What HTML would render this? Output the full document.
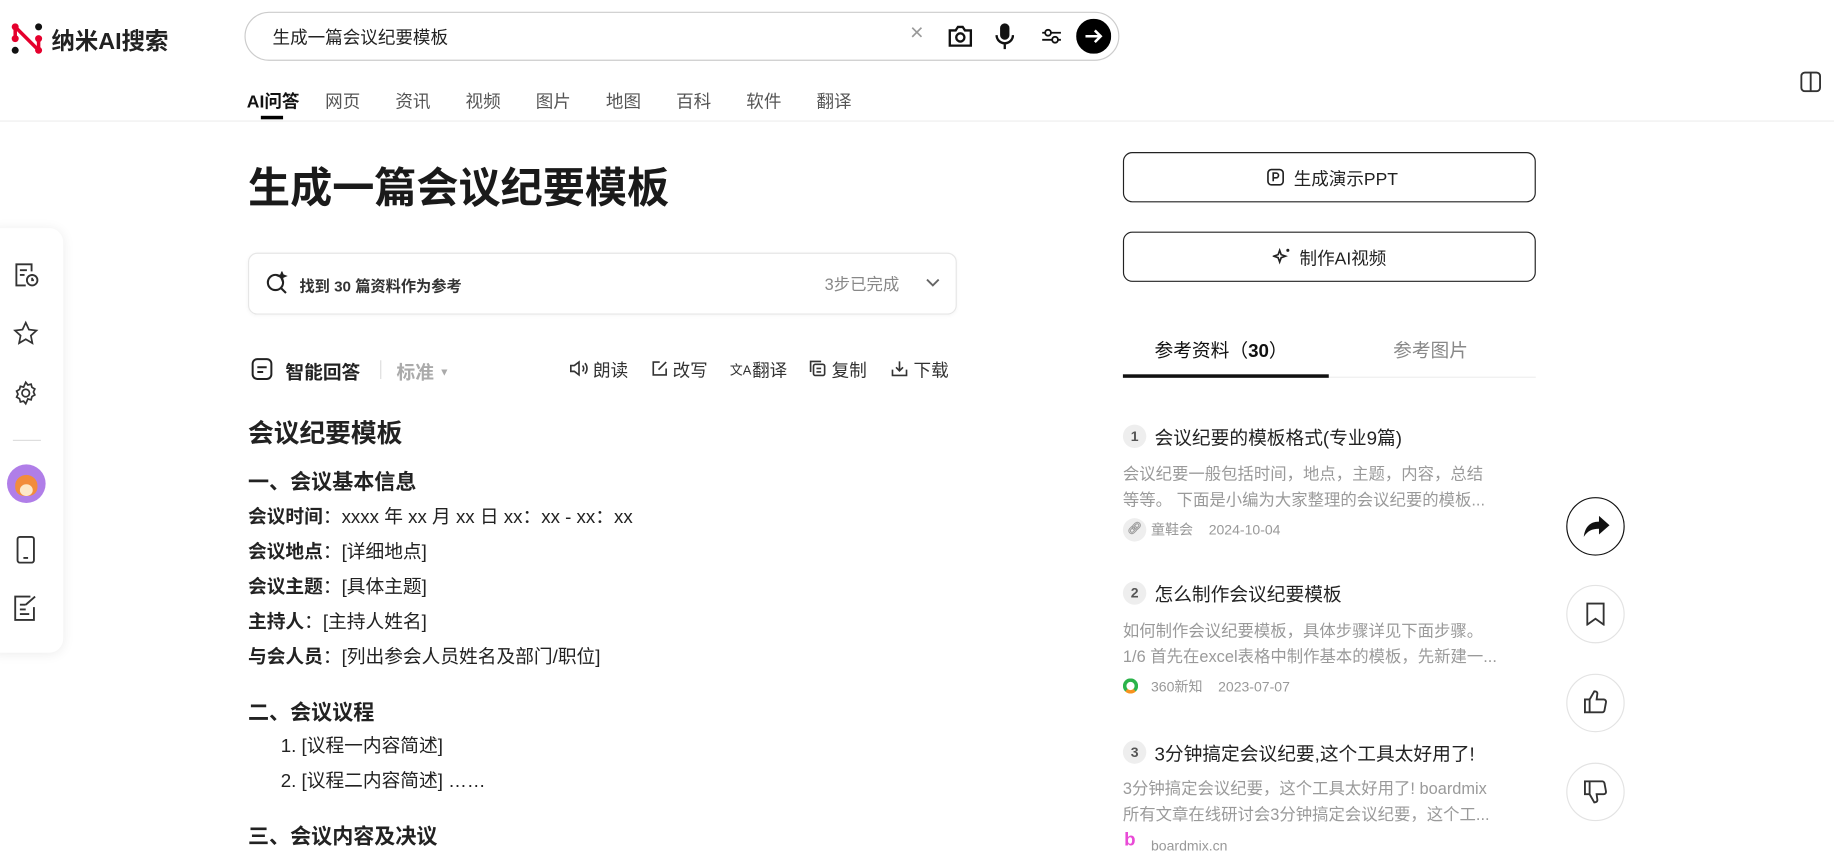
<!DOCTYPE html>
<html><head><meta charset="utf-8"><style>
html,body{margin:0;padding:0;width:1834px;height:863px;overflow:hidden;background:#fff}
#w{position:absolute;left:0;top:0;width:1568px;height:738px;transform:scale(1.1697);transform-origin:0 0;font-family:"Liberation Sans","Noto Sans CJK SC",sans-serif;color:#222}
.a{position:absolute;white-space:nowrap}
.b{font-weight:bold}
.g{color:#888}
svg{position:absolute}
.ln{font-size:16px;line-height:20px}
.circ{position:absolute;width:50px;height:50px;border-radius:50%;border:1px solid #e3e3e3;box-sizing:border-box}
.num{position:absolute;width:20px;height:20px;border-radius:50%;background:#eee;font-size:12px;font-weight:bold;color:#555;text-align:center;line-height:20px}
</style></head><body><div id="w">
<svg style="left:9px;top:19px" width="28" height="28" viewBox="0 0 28 28"><circle cx="4" cy="4" r="3" fill="#e5002d"/><circle cx="4" cy="14" r="3" fill="#e5002d"/><circle cx="4" cy="24" r="3" fill="#111"/><circle cx="24" cy="4" r="3" fill="#111"/><circle cx="24" cy="14" r="3" fill="#e5002d"/><circle cx="24" cy="24" r="3" fill="#e5002d"/><path d="M4 4L24 24M4 14V4M24 14V24" stroke="#e5002d" stroke-width="3"/></svg>
<div class="a b" style="left:44px;top:19px;font-size:20px">纳米AI搜索</div>
<div class="a" style="left:209px;top:10px;width:746px;height:40px;border:1px solid #ccc;border-radius:21px"></div>
<div class="a" style="left:233px;top:21px;font-size:15px">生成一篇会议纪要模板</div>
<div class="a" style="left:778px;top:17px;font-size:20px;color:#999">×</div>
<svg style="left:810px;top:21px" width="22" height="20" viewBox="0 0 22 20"><path d="M2 5h5l2-3h4l2 3h5v13H2z" fill="none" stroke="#111" stroke-width="2"/><circle cx="11" cy="11" r="3.5" fill="none" stroke="#111" stroke-width="2"/></svg>
<svg style="left:851px;top:19px" width="16" height="24" viewBox="0 0 16 24"><rect x="4" y="1" width="8" height="14" rx="4" fill="#111"/><path d="M1 11a7 7 0 0 0 14 0M8 18v5" stroke="#111" stroke-width="2" fill="none"/></svg>
<svg style="left:890px;top:23px" width="18" height="16" viewBox="0 0 18 16"><path d="M1 5h16M1 11h16" stroke="#111" stroke-width="1.6"/><circle cx="6" cy="5" r="2.5" fill="#fff" stroke="#111" stroke-width="1.6"/><circle cx="12" cy="11" r="2.5" fill="#fff" stroke="#111" stroke-width="1.6"/></svg>
<svg style="left:920px;top:16px" width="30" height="30" viewBox="0 0 30 30"><circle cx="15" cy="15" r="15" fill="#000"/><path d="M8 15h13M16 10l5 5-5 5" stroke="#fff" stroke-width="2.2" fill="none"/></svg>
<div class="a" style="left:211px;top:76px;font-size:15px;color:#555"><span class="b" style="color:#111">AI问答</span></div>
<div class="a" style="left:278px;top:76px;font-size:15px;color:#555">网页</div>
<div class="a" style="left:338px;top:76px;font-size:15px;color:#555">资讯</div>
<div class="a" style="left:398px;top:76px;font-size:15px;color:#555">视频</div>
<div class="a" style="left:458px;top:76px;font-size:15px;color:#555">图片</div>
<div class="a" style="left:518px;top:76px;font-size:15px;color:#555">地图</div>
<div class="a" style="left:578px;top:76px;font-size:15px;color:#555">百科</div>
<div class="a" style="left:638px;top:76px;font-size:15px;color:#555">软件</div>
<div class="a" style="left:698px;top:76px;font-size:15px;color:#555">翻译</div>
<div class="a" style="left:223px;top:99px;width:19px;height:3px;background:#000"></div>
<div class="a" style="left:0;top:103px;width:1568px;height:1px;background:#eee"></div>
<svg style="left:1539px;top:61px" width="18" height="18" viewBox="0 0 18 18"><rect x="1" y="1" width="16" height="16" rx="3" fill="none" stroke="#333" stroke-width="1.6"/><path d="M9 1v16" stroke="#333" stroke-width="1.6"/></svg>
<div class="a" style="left:-12px;top:195px;width:66px;height:363px;border-radius:12px;box-shadow:0 1px 10px rgba(0,0,0,.08);background:#fff"></div>
<svg style="left:12px;top:224px" width="22" height="22" viewBox="0 0 22 22" fill="none" stroke="#333" stroke-width="1.6"><path d="M15 8V2H2v18h8M5 7h6M5 11h4"/><circle cx="15.5" cy="15.5" r="4.5"/><path d="M15.5 13.5v2h1.5"/></svg>
<svg style="left:11px;top:274px" width="22" height="22" viewBox="0 0 24 24" fill="none" stroke="#333" stroke-width="1.6"><path d="M12 2l3 6.5 7 .8-5.2 4.8 1.4 7-6.2-3.6-6.2 3.6 1.4-7L2 9.3l7-.8z"/></svg>
<svg style="left:11px;top:325px" width="22" height="22" viewBox="0 0 24 24" fill="none" stroke="#333" stroke-width="1.6"><circle cx="12" cy="12" r="3.5"/><path d="M12 2l2 2.5 3-.8.8 3 2.7 1.5-1.3 2.8 1.3 2.8-2.7 1.5-.8 3-3-.8L12 22l-2-2.5-3 .8-.8-3L3.5 15.8 4.8 13 3.5 10.2 6.2 8.7l.8-3 3 .8z"/></svg>
<div class="a" style="left:11px;top:376px;width:24px;height:1px;background:#ddd"></div>
<div class="a" style="left:6px;top:397px;width:33px;height:33px;border-radius:50%;background:#b07ee8;overflow:hidden"><div style="position:absolute;left:7px;top:9px;width:19px;height:18px;border-radius:50% 50% 40% 40%;background:#f28c3c"></div><div style="position:absolute;left:11px;top:17px;width:11px;height:10px;border-radius:50%;background:#fde8c8"></div></div>
<svg style="left:13px;top:458px" width="18" height="24" viewBox="0 0 18 24" fill="none" stroke="#333" stroke-width="1.6"><rect x="2" y="1" width="14" height="22" rx="2"/><path d="M7 19h4"/></svg>
<svg style="left:12px;top:509px" width="20" height="22" viewBox="0 0 20 22" fill="none" stroke="#333" stroke-width="1.6"><path d="M14 1H1v20h16V10M5 8h5M5 12h5M5 16h8M10 8l8-7"/></svg>
<div class="a b" style="left:212px;top:132px;font-size:36px;color:#1a1a1a">生成一篇会议纪要模板</div>
<div class="a" style="left:212px;top:216px;width:604px;height:51px;border:1px solid #e6e6e6;border-radius:8px;box-shadow:0 1px 3px rgba(0,0,0,.04)"></div>
<svg style="left:227px;top:232px" width="20" height="20" viewBox="0 0 20 20" fill="none" stroke="#222" stroke-width="1.8"><circle cx="8.5" cy="9.5" r="6.5"/><path d="M13.5 14.5l4 4M14 1.5l.7 1.8 1.8.7-1.8.7-.7 1.8-.7-1.8-1.8-.7 1.8-.7z"/></svg>
<div class="a b" style="left:256px;top:234px;font-size:13px;color:#333">找到 30 篇资料作为参考</div>
<div class="a" style="left:705px;top:233px;font-size:14px;color:#888">3步已完成</div>
<svg style="left:791px;top:237px" width="13" height="9" viewBox="0 0 13 9"><path d="M1.5 2l5 5 5-5" stroke="#666" stroke-width="1.6" fill="none"/></svg>
<svg style="left:215px;top:306px" width="18" height="19" viewBox="0 0 18 19" fill="none" stroke="#222" stroke-width="1.7"><rect x="1" y="1" width="16" height="17" rx="4"/><path d="M5 8h8M5 12h5"/></svg>
<div class="a b" style="left:244px;top:305px;font-size:16px;color:#222">智能回答</div>
<div class="a" style="left:325px;top:308px;width:1px;height:16px;background:#ddd"></div>
<div class="a b" style="left:339px;top:305px;font-size:16px;color:#aaa">标准 <span style="font-size:9px;vertical-align:3px">▼</span></div>
<svg style="left:487px;top:308px" width="16" height="14" viewBox="0 0 16 14" fill="none" stroke="#333" stroke-width="1.4"><path d="M1 4.5h3l4-3v11l-4-3H1zM11 4.5a3.5 3.5 0 0 1 0 5M13 2.5a6.5 6.5 0 0 1 0 9"/></svg>
<div class="a" style="left:507px;top:306px;font-size:15px;color:#333">朗读</div>
<svg style="left:557px;top:308px" width="14" height="14" viewBox="0 0 14 14" fill="none" stroke="#333" stroke-width="1.4"><path d="M7 1.5H1.5v11h11V7M6 8l6.5-6.5"/></svg>
<div class="a" style="left:575px;top:306px;font-size:15px;color:#333">改写</div>
<div class="a" style="left:624px;top:308px;font-size:11px;color:#333">文A</div>
<div class="a" style="left:643px;top:306px;font-size:15px;color:#333">翻译</div>
<svg style="left:692px;top:308px" width="14" height="14" viewBox="0 0 14 14" fill="none" stroke="#333" stroke-width="1.4"><rect x="3.5" y="3.5" width="9.5" height="9.5" rx="1.5"/><path d="M1 10V1h9M6 7h4M6 10h4"/></svg>
<div class="a" style="left:711px;top:306px;font-size:15px;color:#333">复制</div>
<svg style="left:762px;top:308px" width="14" height="14" viewBox="0 0 14 14" fill="none" stroke="#333" stroke-width="1.4"><path d="M1 8v5h12V8M7 1v8M4 6l3 3 3-3"/></svg>
<div class="a" style="left:781px;top:306px;font-size:15px;color:#333">下载</div>
<div class="a b" style="left:212px;top:353px;font-size:22px">会议纪要模板</div>
<div class="a b" style="left:212px;top:398px;font-size:18px">一、会议基本信息</div>
<div class="a ln" style="left:212px;top:433px"><b>会议时间</b>：xxxx 年 xx 月 xx 日 xx：xx - xx：xx</div>
<div class="a ln" style="left:212px;top:463px"><b>会议地点</b>：[详细地点]</div>
<div class="a ln" style="left:212px;top:493px"><b>会议主题</b>：[具体主题]</div>
<div class="a ln" style="left:212px;top:523px"><b>主持人</b>：[主持人姓名]</div>
<div class="a ln" style="left:212px;top:553px"><b>与会人员</b>：[列出参会人员姓名及部门/职位]</div>
<div class="a b" style="left:212px;top:595px;font-size:18px">二、会议议程</div>
<div class="a ln" style="left:240px;top:629px">1. [议程一内容简述]</div>
<div class="a ln" style="left:240px;top:659px">2. [议程二内容简述] ……</div>
<div class="a b" style="left:212px;top:701px;font-size:18px">三、会议内容及决议</div>
<div class="a" style="left:960px;top:130px;width:351px;height:41px;border:1px solid #222;border-radius:8px"></div>
<svg style="left:1083px;top:144px" width="15" height="15" viewBox="0 0 15 15" fill="none" stroke="#222" stroke-width="1.4"><rect x="1" y="1" width="13" height="13" rx="3"/><path d="M5.5 11V4h2.5a2 2 0 0 1 0 4H5.5"/></svg>
<div class="a" style="left:1106px;top:142px;font-size:15px">生成演示PPT</div>
<div class="a" style="left:960px;top:198px;width:351px;height:41px;border:1px solid #222;border-radius:8px"></div>
<svg style="left:1088px;top:211px" width="16" height="16" viewBox="0 0 16 16"><path d="M6 3l1.3 3.7L11 8l-3.7 1.3L6 13l-1.3-3.7L1 8l3.7-1.3z" fill="none" stroke="#222" stroke-width="1.4"/><circle cx="13" cy="3" r="1.3" fill="#222"/></svg>
<div class="a" style="left:1111px;top:210px;font-size:15px">制作AI视频</div>
<div class="a" style="left:987px;top:286px;font-size:16px;color:#111">参考资料（<b>30</b>）</div>
<div class="a" style="left:1191px;top:286px;font-size:16px;color:#888">参考图片</div>
<div class="a" style="left:960px;top:322px;width:353px;height:1px;background:#eee"></div>
<div class="a" style="left:960px;top:320px;width:176px;height:3px;background:#111"></div>
<div class="num" style="left:960px;top:363px">1</div>
<div class="a" style="left:987px;top:361px;font-size:16px">会议纪要的模板格式(专业9篇)</div>
<div class="a" style="left:960px;top:394px;font-size:14px;color:#9a9a9a;line-height:22px">会议纪要一般包括时间，地点，主题，内容，总结<br>等等。 下面是小编为大家整理的会议纪要的模板...</div>
<div class="num" style="left:960px;top:443px;background:#eee;color:#999;font-size:10px">🔗︎</div>
<div class="a" style="left:984px;top:444px;font-size:12px;color:#999">童鞋会 &nbsp; &nbsp;2024-10-04</div>
<div class="num" style="left:960px;top:497px">2</div>
<div class="a" style="left:987px;top:495px;font-size:16px">怎么制作会议纪要模板</div>
<div class="a" style="left:960px;top:528px;font-size:14px;color:#9a9a9a;line-height:22px">如何制作会议纪要模板，具体步骤详见下面步骤。<br>1/6 首先在excel表格中制作基本的模板，先新建一...</div>
<div class="a" style="left:960px;top:580px;width:13px;height:13px;border-radius:50%;border:3px solid #2bb34a;border-bottom-color:#f7931e;box-sizing:border-box"></div>
<div class="a" style="left:984px;top:578px;font-size:12px;color:#999">360新知 &nbsp; &nbsp;2023-07-07</div>
<div class="num" style="left:960px;top:633px">3</div>
<div class="a" style="left:987px;top:631px;font-size:16px">3分钟搞定会议纪要,这个工具太好用了!</div>
<div class="a" style="left:960px;top:663px;font-size:14px;color:#9a9a9a;line-height:22px">3分钟搞定会议纪要，这个工具太好用了! boardmix<br>所有文章在线研讨会3分钟搞定会议纪要，这个工...</div>
<div class="a b" style="left:961px;top:710px;font-size:16px;color:#e94ad6">b</div>
<div class="a" style="left:984px;top:716px;font-size:12px;color:#999">boardmix.cn</div>
<div class="circ" style="left:1339px;top:425px;border-color:#111"></div>
<svg style="left:1353px;top:440px" width="24" height="20" viewBox="0 0 24 20"><path d="M14 1l9 8-9 8v-5C8 12 4 14 1 19 2 11 6 6 14 6z" fill="#111"/></svg>
<div class="circ" style="left:1339px;top:500px"></div>
<svg style="left:1356px;top:515px" width="16" height="20" viewBox="0 0 16 20" fill="none" stroke="#333" stroke-width="1.6"><path d="M1 1h14v18l-7-5-7 5z"/></svg>
<div class="circ" style="left:1339px;top:576px"></div>
<svg style="left:1354px;top:590px" width="20" height="20" viewBox="0 0 20 20" fill="none" stroke="#333" stroke-width="1.6"><path d="M1 8h4v11H1zM5 8l4-7c2 0 3 1 2.5 3L11 8h6a2 2 0 0 1 2 2.3l-1.3 7A2 2 0 0 1 15.7 19H5"/></svg>
<div class="circ" style="left:1339px;top:652px"></div>
<svg style="left:1354px;top:667px" width="20" height="20" viewBox="0 0 20 20" fill="none" stroke="#333" stroke-width="1.6"><path d="M1 1h4v11H1zM5 12l4 7c2 0 3-1 2.5-3L11 12h6a2 2 0 0 0 2-2.3l-1.3-7A2 2 0 0 0 15.7 1H5"/></svg>
</div></body></html>
